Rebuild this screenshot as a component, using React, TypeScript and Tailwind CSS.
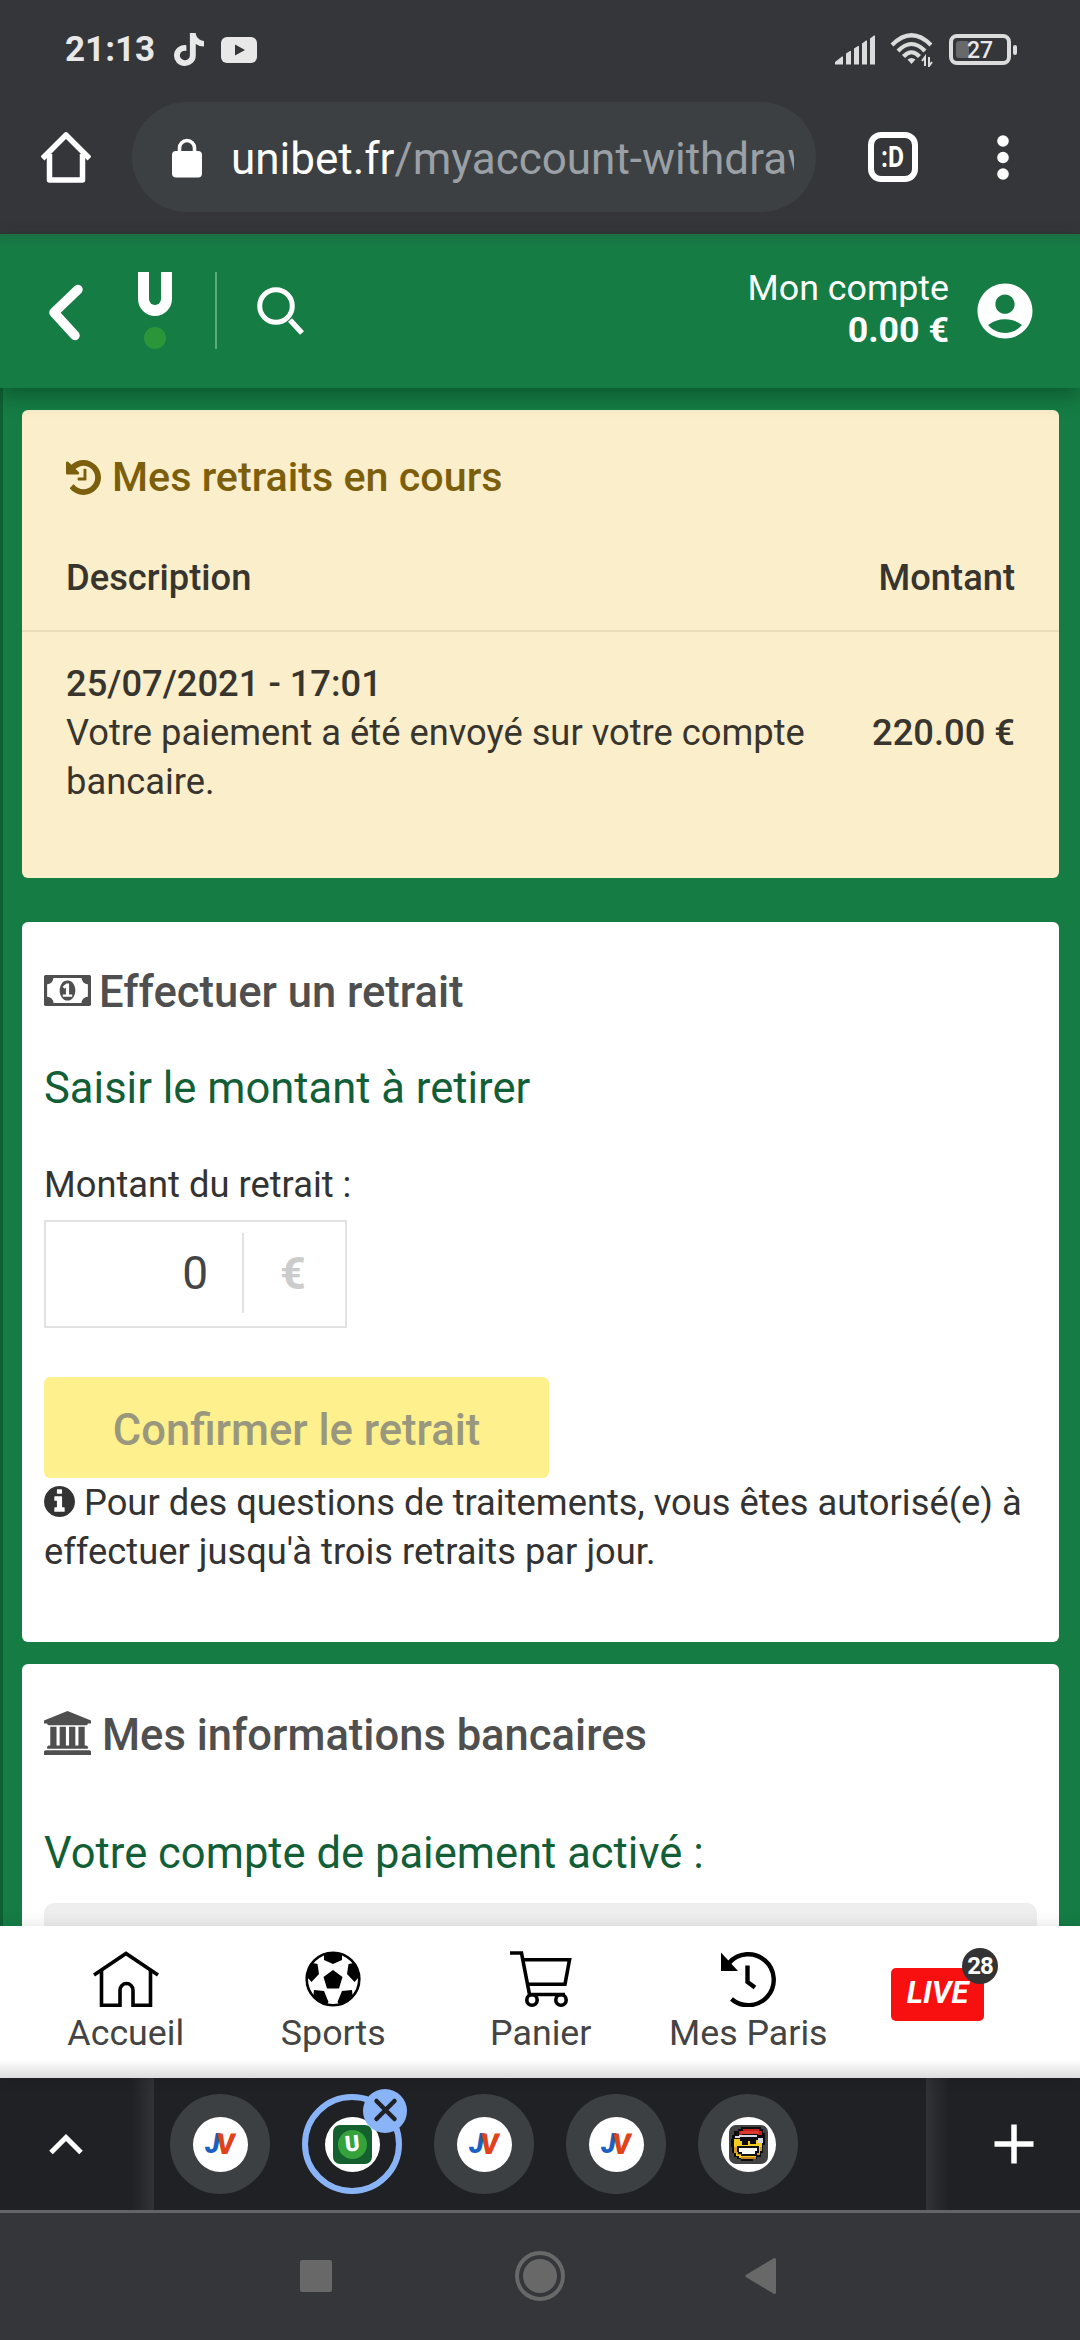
import React from 'react';
import { FaTiktok } from 'react-icons/fa6';
import { MdAccountCircle } from 'react-icons/md';

interface IconProps {
  className?: string;
}

const HistoryIcon: React.FC<IconProps> = ({ className }) => (
  <svg viewBox="128 128 1536 1536" className={className} fill="currentColor">
    <path d="M1664 896q0 156-61 298t-164 245-245 164-298 61q-172 0-327-72.500t-264-204.500q-7-10-6.500-22.500t8.500-20.500l137-138q10-9 25-9 16 2 23 12 73 95 179 147t225 52q104 0 198.500-40.500t163.500-109.500 109.500-163.500 40.500-198.500-40.500-198.500-109.500-163.500-163.500-109.500-198.500-40.500q-98 0-188 35.500t-160 101.500l137 138q31 30 14 69-17 40-59 40h-448q-26 0-45-19t-19-45v-448q0-42 40-59 39-17 69 14l130 129q107-101 244.500-156.500t284.500-55.500q156 0 298 61t245 164 164 245 61 298zM1024 544v448q0 14-9 23t-23 9h-320q-14 0-23-9t-9-23v-64q0-14 9-23t23-9h224v-352q0-14 9-23t23-9h64q14 0 23 9t9 23z" />
  </svg>
);

const MoneyIcon: React.FC<IconProps> = ({ className }) => (
  <svg viewBox="0 256 1920 1280" className={className} fill="currentColor" preserveAspectRatio="none">
    <path d="M768 1152h384v-96h-128v-448h-114l-148 137 77 80q42-37 55-57h2v288h-128v96zm512-256q0 70-21 142t-59.500 134-101.500 101-138 39-138-39-101.500-101-59.500-134-21-142 21-142 59.500-134 101.500-101 138-39 138 39 101.500 101 59.500 134 21 142zm512 256v-512q-106 0-181-75t-75-181h-1152q0 106-75 181t-181 75v512q106 0 181 75t75 181h1152q0-106 75-181t181-75zm128-832v1152q0 26-19 45t-45 19h-1792q-26 0-45-19t-19-45v-1152q0-26 19-45t45-19h1792q26 0 45 19t19 45z" />
  </svg>
);

const BankIcon: React.FC<IconProps> = ({ className }) => (
  <svg viewBox="0 0 1920 1792" className={className} fill="currentColor">
    <path d="M960 0l960 384v128h-128q0 26-20.500 45t-48.500 19h-1526q-28 0-48.500-19t-20.500-45h-128v-128zm-704 640h256v768h128v-768h256v768h128v-768h256v768h128v-768h256v768h59q28 0 48.500 19t20.500 45v64h-1664v-64q0-26 20.500-45t48.500-19h59v-768zm1595 960q28 0 48.500 19t20.500 45v128h-1920v-128q0-26 20.500-45t48.500-19h1782z" />
  </svg>
);

const InfoIcon: React.FC<IconProps> = ({ className }) => (
  <svg viewBox="128 128 1536 1536" className={className} fill="currentColor">
    <path d="M1152 1376v-160q0-14-9-23t-23-9h-96v-512q0-14-9-23t-23-9h-320q-14 0-23 9t-9 23v160q0 14 9 23t23 9h96v320h-96q-14 0-23 9t-9 23v160q0 14 9 23t23 9h448q14 0 23-9t9-23zm-128-896v-160q0-14-9-23t-23-9h-192q-14 0-23 9t-9 23v160q0 14 9 23t23 9h192q14 0 23-9t9-23zm640 416q0 209-103 385.500t-279.500 279.500-385.500 103-385.500-103-279.500-279.500-103-385.500 103-385.500 279.500-279.500 385.500-103 385.500 103 279.500 279.500 103 385.500z" />
  </svg>
);

const StatusBar: React.FC = () => (
  <div className="flex h-[102px] items-center pb-[3px] pl-[65px] pr-[63px] text-[#e8e8e8]">
    <span className="w-[109px] text-[35px] leading-none font-bold">21:13</span>
    <FaTiktok className="h-[33px] w-[30px]" preserveAspectRatio="none" />
    <svg className="ml-[17px] h-[26px] w-[36px]" viewBox="0 0 36 26">
      <rect width="36" height="26" rx="6" fill="currentColor" />
      <path d="M14 7.500v11l10-5.500z" fill="#35363a" />
    </svg>
    <div className="flex-1" />
    <svg className="h-[30px] w-[40px] text-[#dcdcdc]" viewBox="0 0 40 30" fill="currentColor">
      <path d="M0 29.500v-2.500l7-5.500h1v8zM11 29.500v-11l4-2.500h1v13.500zM19 29.500v-16l4-2.500h1v18.500zM27 29.500v-21l4-3h1v24zM35 29.500v-26l4-3h1v29z" />
    </svg>
    <svg className="ml-[15px] h-[34px] w-[44px] text-[#dcdcdc]" viewBox="0 0 44 34" fill="none" stroke="currentColor" strokeWidth="4.200">
      <path d="M2 12Q21.500-7.500 41 12" />
      <path d="M8 18Q21.500 4 35 18" />
      <path d="M13.500 23.500Q21.500 15 29.500 23.500" />
      <path d="M21.500 31l-4-4.500q4-3 8 0z" fill="currentColor" stroke="none" />
      <path d="M35 33V24l-3 4M39 24v9l3-4" strokeWidth="2" />
    </svg>
    <div className="ml-[15px] flex h-[31px] w-[62px] items-center rounded-[8px] border-[4px] border-[#dcdcdc] pl-[3px]">
      <div className="h-[17px] w-[13px] rounded-[3px] bg-[#68696b]" />
      <span className="-ml-[2px] pt-[2px] text-[23px] leading-none font-medium">27</span>
    </div>
    <div className="ml-[2px] h-[10px] w-[4px] rounded-[2px] bg-[#dcdcdc]" />
  </div>
);

const BrowserBar: React.FC = () => (
  <div className="flex h-[132px] pl-[41px]">
    <svg className="mt-[30px] h-[51px] w-[50px]" viewBox="0 0 50 51" fill="none" stroke="#fff" strokeWidth="5.500" strokeLinejoin="round">
      <path d="M1.500 26.500L25 3l23.500 23.500" />
      <path d="M8.500 22v26h33V22" />
    </svg>
    <div className="ml-[41px] flex h-[110px] w-[684px] items-center rounded-full bg-[#3c4043] pl-[40px]">
      <svg className="mt-[1px] h-[40px] w-[30px]" viewBox="0 0 30 40">
        <rect y="13" width="30" height="26.500" rx="4" fill="#fff" />
        <path d="M7.500 15V10a7.500 7.500 0 0 1 15 0v5" fill="none" stroke="#fff" strokeWidth="3.600" />
      </svg>
      <div className="mt-[3px] ml-[29px] w-[563px] overflow-hidden text-[44px] leading-[60px] whitespace-nowrap text-[#9aa0a6]">
        <span className="text-white">unibet.fr</span>/myaccount-withdraw
      </div>
    </div>
    <div className="mt-[30px] ml-[52px] flex h-[50px] w-[50px] items-center justify-center rounded-[13px] border-[6px] border-white text-[29px] leading-none font-bold text-white">
      <span className="scale-x-[0.85]">:D</span>
    </div>
    <svg className="mt-[33px] ml-[79px] h-[46px] w-[12px]" viewBox="0 0 12 46" fill="#fff">
      <circle cx="6" cy="6" r="5.800" />
      <circle cx="6" cy="22.500" r="5.800" />
      <circle cx="6" cy="39" r="5.800" />
    </svg>
  </div>
);

const SiteHeader: React.FC = () => (
  <header className="relative z-10 flex h-[154px] items-start bg-[#157c44] bg-linear-to-b from-[#1a7044] from-0% to-[#157c44] to-[9%] text-white shadow-[0_8px_18px_rgba(0,40,20,0.4)]">
    <svg className="mt-[50px] ml-[48px] h-[58px] w-[36px]" viewBox="0 0 36 58" fill="none" stroke="#fff" strokeWidth="9.500" strokeLinecap="round" strokeLinejoin="round">
      <path d="M30 5.500L6 28.500L27 51.500" />
    </svg>
    <div className="mt-[38px] ml-[54px] flex w-[34px] flex-col items-center">
      <div className="h-[44px] w-[34px] rounded-b-[17px] border-[11px] border-t-0 border-white" />
      <div className="mt-[11px] h-[22px] w-[22px] rounded-full bg-[#2b9639]" />
    </div>
    <div className="mt-[38px] ml-[43px] h-[77px] w-[2px] bg-[#5fa981]" />
    <svg className="mt-[52px] ml-[40px] h-[50px] w-[48px]" viewBox="0 0 48 50" fill="none" stroke="#fff">
      <circle cx="19" cy="20" r="16.300" strokeWidth="5" />
      <path d="M33 34L45 47" strokeWidth="5.500" />
    </svg>
    <div className="mt-[33px] ml-auto text-right text-[35.75px] leading-[42px]">
      <div>Mon compte</div>
      <div className="font-bold">0.00 €</div>
    </div>
    <MdAccountCircle className="mt-[44px] mr-[42px] ml-[23px] h-[66px] w-[66px]" />
  </header>
);

const PendingWithdrawals: React.FC = () => (
  <section className="h-[468px] rounded-[6px] bg-[#fbeecb] text-[36.3px] leading-[49px] text-[#37352d]">
    <h2 className="flex items-center px-[44px] pt-[39px] text-[41.25px] leading-[56px] font-medium text-[#7c5f0c]">
      <HistoryIcon className="h-[35px] w-[35px]" />
      <span className="ml-[11px]">Mes retraits en cours</span>
    </h2>
    <div className="flex justify-between border-b-[2px] border-[#eaddb9] px-[44px] pt-[48px] pb-[28px] font-medium">
      <span>Description</span>
      <span>Montant</span>
    </div>
    <div className="flex items-center justify-between px-[44px] pt-[27px]">
      <div>
        <p className="font-medium">25/07/2021 - 17:01</p>
        <p className="w-[760px]">Votre paiement a été envoyé sur votre compte bancaire.</p>
      </div>
      <span className="font-medium whitespace-nowrap">220.00 €</span>
    </div>
  </section>
);

const WithdrawForm: React.FC = () => (
  <section className="mt-[44px] h-[720px] rounded-[6px] bg-white px-[22px] text-[36.3px] leading-[49px] text-[#333]">
    <h2 className="flex items-center pt-[43px] text-[43.56px] leading-[56px] font-medium text-[#4f4f4f]">
      <MoneyIcon className="-mt-[5px] h-[31px] w-[47px]" />
      <span className="ml-[8px]">Effectuer un retrait</span>
    </h2>
    <h3 className="mt-[40px] text-[43.56px] leading-[56px] text-[#125f37]">Saisir le montant à retirer</h3>
    <p className="mt-[43px]">Montant du retrait :</p>
    <div className="mt-[11px] flex h-[108px] w-[303px] items-center border-[2px] border-[#e2e2e2] pb-[2px]">
      <span className="w-[162px] text-right text-[46px] text-[#444]">0</span>
      <div className="ml-[34px] h-[80px] w-[2px] bg-[#e2e2e2]" />
      <span className="flex-1 pr-[3px] text-center text-[45px] font-bold text-[#ccc]">€</span>
    </div>
    <button className="mt-[49px] block h-[101px] w-[505px] rounded-[6px] bg-[#fef08d] pt-[5px] text-[43.56px] font-medium text-[#99987f]">
      Confirmer le retrait
    </button>
    <p className="whitespace-nowrap">
      <InfoIcon className="-mt-[7px] mr-[9px] inline-block h-[31px] w-[31px]" />
      Pour des questions de traitements, vous êtes autorisé(e) à
      <br />
      effectuer jusqu'à trois retraits par jour.
    </p>
  </section>
);

const BankInfo: React.FC = () => (
  <section className="mt-[22px] rounded-t-[6px] bg-white px-[22px]">
    <h2 className="flex items-center pt-[44px] text-[43.56px] leading-[56px] font-medium text-[#4f4f4f]">
      <BankIcon className="-mt-[6px] h-[44px] w-[47px]" />
      <span className="ml-[11px]">Mes informations bancaires</span>
    </h2>
    <h3 className="mt-[62px] text-[43.56px] leading-[56px] text-[#125f37]">Votre compte de paiement activé :</h3>
    <div className="mt-[21px] h-[200px] rounded-[10px] bg-[#eee]" />
  </section>
);

const HomeIcon = () => (
  <svg className="h-[56px] w-[66px]" viewBox="0 0 66 56" fill="none" stroke="#000" strokeWidth="3.600">
    <path d="M1 24L33 2.500L65 24" />
    <path d="M8.500 19.500V54.200H27V39a6.200 6.200 0 0 1 13 0V54.200H57.500V19.500" />
  </svg>
);

const BallIcon = () => (
  <svg className="h-[56px] w-[56px]" viewBox="0 0 56 56">
    <circle cx="28" cy="28" r="26.300" fill="#fff" stroke="#000" strokeWidth="2.600" />
    <path d="M28 19l9.500 7-3.500 11.500H22L18.500 26zM19 3.500Q28-.5 37 3.500V9l-9 4-9-4zM2 26Q2 17 7 12l5.500 1 1.500 10-7.500 8zM54 26Q54 17 49 12l-5.500 1-1.500 10 7.500 8zM9 39l10 1 4.500 11-2 3Q13 51 8.500 44zM47 39l-10 1-4.500 11 2 3Q43 51 47.500 44z" fill="#000" />
  </svg>
);

const CartIcon = () => (
  <svg className="h-[56px] w-[62px]" viewBox="0 0 62 56" fill="none" stroke="#000" strokeWidth="3.600">
    <path d="M0 2H11.500L19.500 43.500H55" />
    <path d="M13.500 8.800H59.500L55 33.300H18.500" />
    <circle cx="22" cy="49" r="5.200" />
    <circle cx="51" cy="49" r="5.200" />
  </svg>
);

const BetsIcon = () => (
  <svg className="h-[56px] w-[56px]" viewBox="0 0 56 56" fill="none" stroke="#000" strokeWidth="4.400">
    <path d="M9 12A25.500 25.500 0 1 1 11.500 48" />
    <path d="M27.500 14.500V31L35 36.500" />
    <path d="M1 1.500V20H18z" fill="#000" stroke="none" />
  </svg>
);

const navItems = [
  { label: 'Accueil', icon: <HomeIcon /> },
  { label: 'Sports', icon: <BallIcon /> },
  { label: 'Panier', icon: <CartIcon /> },
  { label: 'Mes Paris', icon: <BetsIcon /> },
];

const BottomNav: React.FC = () => (
  <nav className="relative z-10 flex h-[152px] bg-white bg-linear-to-t from-[#dcdcdc] from-0% to-white to-[12%] pl-[22px] shadow-[0_0_16px_rgba(0,0,0,0.12)]">
    {navItems.map((item) => (
      <div key={item.label} className="flex w-[207.500px] flex-col items-center pt-[25px] text-[#444]">
        {item.icon}
        <span className="mt-[4px] text-[35.75px] leading-[44px]">{item.label}</span>
      </div>
    ))}
    <div className="relative mt-[42px] ml-[39px] flex h-[53px] w-[93px] items-center justify-center rounded-[5px] bg-[#f80f0f] pb-[4px] text-[31px] leading-none font-bold text-white italic">
      LIVE
      <span className="absolute -top-[20px] left-[71px] flex h-[36px] w-[36px] items-center justify-center rounded-full bg-[#333] text-[24px] tracking-[-1px] not-italic">
        28
      </span>
    </div>
  </nav>
);

const JvFavicon = () => (
  <div className="flex items-center justify-center text-[29px] leading-none font-black">
    <span className="text-[27px] text-[#1b5fc4] italic">J</span>
    <span className="-ml-[4px] -skew-x-6 text-[#e0421a]">V</span>
  </div>
);

const UnibetFavicon = () => (
  <div className="flex h-[39px] w-[39px] items-center justify-center rounded-[7px] bg-[#15602f]">
    <div className="flex h-[29px] w-[29px] items-center justify-center rounded-full bg-[#36a23c]">
      <span className="-rotate-6 text-[22px] leading-none font-black text-white">U</span>
    </div>
  </div>
);

const SmileyFavicon = () => (
  <svg className="h-[39px] w-[39px]" viewBox="0 0 39 39">
    <rect width="39" height="39" rx="7" fill="#434343" />
    <g shapeRendering="crispEdges">
      <path d="M12 2h20v2h2v4h2v12h-2v8h-2v4h-4v2h-4v2H12v-2H8v-2H5v-4H3v-6H2v-8h1v-4h2V6h4V4h3z" fill="#0d0d0d" />
      <path d="M5 14h28v12h-2v4h-4v3H10v-2H7v-4H5z" fill="#f4cd1f" />
      <path d="M5 22h4v6h3v2H8v-2H5zM31 22h2v4h-2v4h-3v-2h3z" fill="#d39a2c" />
      <path d="M14 4h16v2h3v4h-4V8H13v2h-3V6h4z" fill="#c9201c" />
      <path d="M12 6h18v3H12z" fill="#dc3a30" />
      <path d="M10 10h18v2H10zM6 11h5v2H6zM29 13h5v5h-5z" fill="#d8d8e4" />
      <path d="M11 13h18v2h-2v4h-6v-3h-2v4h-6v-4h-2z" fill="#0b0b0b" />
      <path d="M8 21h22v7h-2v3H12v-2h-3v-2H8z" fill="#111" />
      <path d="M10 23h18v3h-2v3H13v-2h-3z" fill="#fff" />
      <path d="M12 32h15v2H12z" fill="#c98724" />
    </g>
  </svg>
);

const tabs = [
  { icon: <JvFavicon /> },
  { icon: <UnibetFavicon />, active: true },
  { icon: <JvFavicon /> },
  { icon: <JvFavicon /> },
  { icon: <SmileyFavicon /> },
];

const TabStrip: React.FC = () => (
  <div className="flex h-[135px] border-b-[3px] border-[#636467] bg-[#202124]">
    <div className="flex w-[154px] items-center bg-linear-to-r from-[#202124] from-85% to-[#323336] pl-[49px]">
      <svg className="h-[22px] w-[34px]" viewBox="0 0 34 22" fill="none" stroke="#fff" strokeWidth="5">
        <path d="M2 19.500L17 4.500L32 19.500" />
      </svg>
    </div>
    <div className="flex flex-1 items-center gap-[32px] pl-[16px]">
      {tabs.map((tab, i) => (
        <div
          key={i}
          className={`relative flex h-[100px] w-[100px] items-center justify-center rounded-full ${tab.active ? 'border-[6px] border-[#8ab4f8]' : 'bg-[#3c4043]'}`}
        >
          <div className="flex h-[55px] w-[55px] items-center justify-center rounded-full bg-white">{tab.icon}</div>
          {tab.active && (
            <svg className="absolute -top-[11px] left-[55px] h-[44px] w-[44px]" viewBox="0 0 44 44">
              <circle cx="22" cy="22" r="22" fill="#8ab4f8" />
              <path d="M13.500 12L31.500 30M31.500 12L13.500 30" stroke="#202124" strokeWidth="4.500" strokeLinecap="round" />
            </svg>
          )}
        </div>
      ))}
    </div>
    <div className="flex w-[154px] items-center bg-linear-to-l from-[#202124] from-85% to-[#323336] pl-[68px]">
      <svg className="h-[40px] w-[40px]" viewBox="0 0 40 40" stroke="#fff" strokeWidth="5.500">
        <path d="M20 .5V39.500M.5 20H39.500" />
      </svg>
    </div>
  </div>
);

const SystemNav: React.FC = () => (
  <div className="flex h-[127px] items-center pb-[2px] pl-[300px]">
    <div className="h-[32px] w-[32px] rounded-[2px] bg-[#686868]" />
    <div className="ml-[183px] flex h-[50px] w-[50px] items-center justify-center rounded-full border-[4px] border-[#686868]">
      <div className="h-[34px] w-[34px] rounded-full bg-[#686868]" />
    </div>
    <svg className="ml-[180px] h-[38px] w-[32px]" viewBox="0 0 32 38">
      <path d="M2 19L29.500 2.500V35.500z" fill="#686868" stroke="#686868" strokeWidth="3" strokeLinejoin="round" />
    </svg>
  </div>
);

const App: React.FC = () => {
  return (
    <div className="flex h-[2340px] w-[1080px] flex-col overflow-hidden bg-[#35363a] font-[Roboto,sans-serif]">
      <StatusBar />
      <BrowserBar />
      <SiteHeader />
      <main className="h-[1538px] overflow-hidden border-l-[3px] border-[#0f5f35] bg-[#157c44] pt-[22px] pr-[21px] pl-[19px]">
        <PendingWithdrawals />
        <WithdrawForm />
        <BankInfo />
      </main>
      <BottomNav />
      <TabStrip />
      <SystemNav />
    </div>
  );
};

export default App;
